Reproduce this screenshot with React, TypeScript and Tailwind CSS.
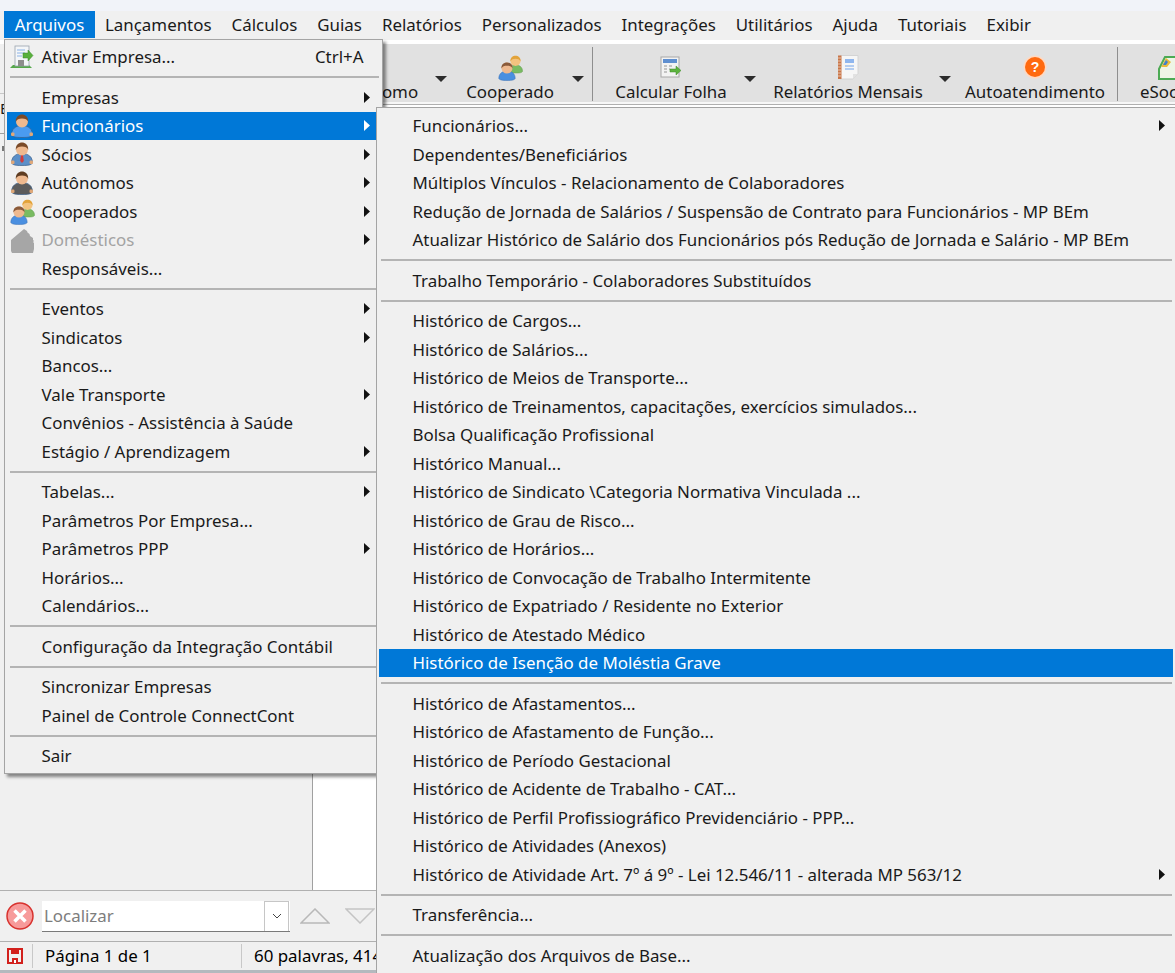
import type { ReactNode } from 'react';

type Row =
  | { sep: true }
  | {
      sep?: false;
      label: string;
      arrow?: boolean;
      active?: boolean;
      disabled?: boolean;
      shortcut?: string;
      icon?: ReactNode;
    };

function Person({ body = '#4a8fe0', hair = '#7a4a28', tie }: { body?: string; hair?: string; tie?: string }) {
  return (
    <svg width="24" height="24" viewBox="0 0 24 24" className="block">
      <path d="M1.500 21c0-6 4-9.500 10.500-9.500S22.500 15 22.500 21c-1.500 2-4 2.500-10.500 2.500S3 23 1.500 21z" fill={body} stroke="#3a5f8a" strokeWidth="0.7" />
      <rect x="1" y="18.500" width="3.500" height="3.500" rx="1.200" fill="#e0a878" />
      <rect x="19.500" y="18.500" width="3.500" height="3.500" rx="1.200" fill="#e0a878" />
      {tie && <path d="M11 13h2l.8 6-1.800 2-1.800-2z" fill={tie} />}
      <circle cx="12" cy="7.500" r="6" fill="#eeb98f" />
      <path d="M5.800 8C5.500 2.500 9 .5 12 .5s6.500 2 6.200 7.500c-1-2.800-3-3.500-6.200-3.500S6.800 5.200 5.800 8z" fill={hair} />
    </svg>
  );
}

function Pair() {
  return (
    <svg width="25" height="26" viewBox="0 0 25 26" className="block">
      <path d="M11 17c0-5 2.500-7 6.500-7s7 2 7 6.500c-1 1.500-3 1.500-6.500 1.500s-6-.2-7-1z" fill="#79bb62" stroke="#5e9a4b" strokeWidth="0.5" />
      <circle cx="17.500" cy="6" r="5" fill="#f3c37f" />
      <path d="M12.400 6.500C12.200 2.500 15 .8 17.500 .8s5.300 1.700 5.100 5.700c-1-2.200-2.800-2.800-5.100-2.800s-4.100.6-5.100 2.800z" fill="#e2a33a" />
      <path d="M.8 23.500c0-5 3.500-7.500 8.200-7.500s8.200 2.500 8.200 7.500c-1 1.500-3 2-8.200 2s-7.200-.5-8.200-2z" fill="#4a8fe0" stroke="#3a6fb0" strokeWidth="0.5" />
      <circle cx="9" cy="13" r="5.500" fill="#eeb98f" />
      <path d="M3.400 13.500C3.200 9 6.300 7.500 9 7.500s5.800 1.500 5.600 6c-1-2.300-3-2.800-5.600-2.800s-4.600.5-5.600 2.800z" fill="#8a5a3a" />
    </svg>
  );
}

function House() {
  return (
    <svg width="26" height="25" viewBox="0 0 26 25" className="block">
      <path d="M1 12 14 1l3 2 .5 1.500 2 1.500.5 2 3 2v2l1 1-1 1 1 1v6l-1 4H2l-1-2z" fill="#a6a6a6" />
    </svg>
  );
}

function ActivateDoc() {
  return (
    <svg width="24" height="24" viewBox="0 0 24 24" className="block">
      <path d="M0 23 3 20h16l3 3z" fill="#55a84a" />
      <rect x="5" y="1" width="14" height="20" fill="#f4f6f8" stroke="#9aa3ad" strokeWidth="0.8" />
      <path d="M7 5h8M7 8h8M7 11h5" stroke="#8ab2e6" strokeWidth="1.200" />
      <rect x="8" y="15" width="6" height="6" fill="#8d8d8d" />
      <path d="M13 8h5V5l5 5.500-5 5.500v-3h-5z" fill="#58b03c" stroke="#3f8a2b" strokeWidth="0.5" />
    </svg>
  );
}

function Arrow({ light }: { light?: boolean }) {
  return (
    <svg width="6" height="11" viewBox="0 0 6 11" className="block">
      <path d="M0 0 6 5.500 0 11z" fill={light ? '#ffffff' : '#111111'} />
    </svg>
  );
}

function Caret() {
  return (
    <svg width="12" height="6" viewBox="0 0 12 6" className="block">
      <path d="M0 0h12L6 6z" fill="#2c2c2c" />
    </svg>
  );
}

const leftRows: Row[] = [
  { label: 'Ativar Empresa...', shortcut: 'Ctrl+A', icon: <ActivateDoc /> },
  { sep: true },
  { label: 'Empresas', arrow: true },
  { label: 'Funcionários', arrow: true, active: true, icon: <Person body="#4a9bf0" /> },
  { label: 'Sócios', arrow: true, icon: <Person body="#5b8fc8" tie="#d23b3b" /> },
  { label: 'Autônomos', arrow: true, icon: <Person body="#5c5c5c" hair="#5f3d22" /> },
  { label: 'Cooperados', arrow: true, icon: <Pair /> },
  { label: 'Domésticos', arrow: true, disabled: true, icon: <House /> },
  { label: 'Responsáveis...' },
  { sep: true },
  { label: 'Eventos', arrow: true },
  { label: 'Sindicatos', arrow: true },
  { label: 'Bancos...' },
  { label: 'Vale Transporte', arrow: true },
  { label: 'Convênios - Assistência à Saúde' },
  { label: 'Estágio / Aprendizagem', arrow: true },
  { sep: true },
  { label: 'Tabelas...', arrow: true },
  { label: 'Parâmetros Por Empresa...' },
  { label: 'Parâmetros PPP', arrow: true },
  { label: 'Horários...' },
  { label: 'Calendários...' },
  { sep: true },
  { label: 'Configuração da Integração Contábil' },
  { sep: true },
  { label: 'Sincronizar Empresas' },
  { label: 'Painel de Controle ConnectCont' },
  { sep: true },
  { label: 'Sair' },
];

const rightRows: Row[] = [
  { label: 'Funcionários...', arrow: true },
  { label: 'Dependentes/Beneficiários' },
  { label: 'Múltiplos Vínculos - Relacionamento de Colaboradores' },
  { label: 'Redução de Jornada de Salários / Suspensão de Contrato para Funcionários - MP BEm' },
  { label: 'Atualizar Histórico de Salário dos Funcionários pós Redução de Jornada e Salário - MP BEm' },
  { sep: true },
  { label: 'Trabalho Temporário - Colaboradores Substituídos' },
  { sep: true },
  { label: 'Histórico de Cargos...' },
  { label: 'Histórico de Salários...' },
  { label: 'Histórico de Meios de Transporte...' },
  { label: 'Histórico de Treinamentos, capacitações, exercícios simulados...' },
  { label: 'Bolsa Qualificação Profissional' },
  { label: 'Histórico Manual...' },
  { label: 'Histórico de Sindicato \\Categoria Normativa Vinculada ...' },
  { label: 'Histórico de Grau de Risco...' },
  { label: 'Histórico de Horários...' },
  { label: 'Histórico de Convocação de Trabalho Intermitente' },
  { label: 'Histórico de Expatriado / Residente no Exterior' },
  { label: 'Histórico de Atestado Médico' },
  { label: 'Histórico de Isenção de Moléstia Grave', active: true },
  { sep: true },
  { label: 'Histórico de Afastamentos...' },
  { label: 'Histórico de Afastamento de Função...' },
  { label: 'Histórico de Período Gestacional' },
  { label: 'Histórico de Acidente de Trabalho - CAT...' },
  { label: 'Histórico de Perfil Profissiográfico Previdenciário - PPP...' },
  { label: 'Histórico de Atividades (Anexos)' },
  { label: 'Histórico de Atividade Art. 7º á 9º - Lei 12.546/11 - alterada MP 563/12', arrow: true },
  { sep: true },
  { label: 'Transferência...' },
  { sep: true },
  { label: 'Atualização dos Arquivos de Base...' },
];

const menuBar = ['Lançamentos', 'Cálculos', 'Guias', 'Relatórios', 'Personalizados', 'Integrações', 'Utilitários', 'Ajuda', 'Tutoriais', 'Exibir'];

function MenuRows({ rows, side }: { rows: Row[]; side: 'left' | 'right' }) {
  return (
    <>
      {rows.map((row, i) => {
        if (row.sep) {
          return (
            <div key={i} className={`h-[12px] flex items-center ${side === 'left' ? 'pl-[2.5px] pr-[3px]' : 'pl-[2px] pr-[1px]'}`}>
              <div className="h-[2px] w-full bg-[#b4b4b4]" />
            </div>
          );
        }
        return (
          <div
            key={i}
            className={`relative h-[28.5px] flex items-center ${side === 'left' ? 'pl-[34.500px] pr-[12.500px]' : 'pl-[33.500px] pr-[8px]'} ${
              row.active ? 'bg-[#0078d7] text-white' : row.disabled ? 'text-[#a3a3a3]' : 'text-[#1a1a1a]'
            }`}
          >
            {row.icon && <span className="absolute left-[3px] top-[2px]">{row.icon}</span>}
            <span className="flex-1 whitespace-nowrap">{row.label}</span>
            {row.shortcut && <span className="pr-[6px]">{row.shortcut}</span>}
            {row.arrow && <Arrow light={row.active} />}
          </div>
        );
      })}
    </>
  );
}

function ToolButton({
  total,
  content,
  caretRight,
  icon,
  label,
}: {
  total: string;
  content: string;
  caretRight?: string;
  icon?: ReactNode;
  label: string;
}) {
  return (
    <div className={`${total} shrink-0 relative h-full`}>
      <div className={`${content} flex flex-col items-center`}>
        <div className="h-[38px] pt-[11px] flex items-start justify-center">{icon}</div>
        <span className="whitespace-nowrap leading-[20px]">{label}</span>
      </div>
      {caretRight && (
        <span className={`absolute top-[32px] ${caretRight}`}>
          <Caret />
        </span>
      )}
    </div>
  );
}

export default function App() {
  return (
    <div className="relative w-[1175px] h-[973px] overflow-hidden bg-[#f0f0f0] font-['Noto_Sans',sans-serif] text-[16.900px] text-[#1a1a1a] flex flex-col">
      <div className="h-[11px] shrink-0 bg-[#f1f3f9]" />

      <div className="h-[29px] shrink-0 flex items-center pl-[4px] bg-[#f0f0f0]">
        <div className="w-[91px] h-[27px] -mt-[2px] flex items-center justify-center bg-[#0078d7] text-white">Arquivos</div>
        {menuBar.map((m) => (
          <div key={m} className="px-[10px] whitespace-nowrap -mt-[1px]">
            {m}
          </div>
        ))}
      </div>

      <div className="h-[4px] shrink-0 bg-white" />

      <div className="flex-1 flex min-h-0">
        <div className="w-[4px] shrink-0 overflow-hidden flex flex-col">
          <div className="h-[49px]" />
          <div className="h-px bg-[#c8c8c8]" />
          <div className="h-[28px] leading-[28px] text-[15px]">E</div>
          <div className="h-[11px]" />
          <div className="h-px bg-[#a0a0a0]" />
          <div className="ml-[2px] mt-[12px] w-[2px] h-[5px] bg-[#777777]" />
        </div>

        <div className="flex-1 min-w-0 flex flex-col">
          <div className="h-[58px] shrink-0 bg-[#e1e1e1] flex pl-[301px] overflow-hidden">
            <ToolButton total="w-[142px]" content="w-[142px]" caretRight="right-[0px]" label="Autônomo" />
            <ToolButton total="w-[145px]" content="w-[126px]" caretRight="right-[8px]" label="Cooperado" icon={<Pair />} />
            <div className="w-px h-[54px] mt-[3px] shrink-0 bg-[#8e8e8e]" />
            <ToolButton
              total="w-[175px]"
              content="w-[156px]"
              caretRight="right-[12px]"
              label="Calcular Folha"
              icon={
                <svg width="24" height="24" viewBox="0 0 24 24" className="block">
                  <rect x="2" y="2" width="18" height="20" fill="#f3f3f3" stroke="#a8a8a8" />
                  <rect x="4" y="4" width="14" height="4" fill="#5f8fd0" />
                  <path d="M5 11h3M10 11h3M5 14h3M5 17h3M10 14h1" stroke="#b5b5b5" strokeWidth="1.500" />
                  <path d="M11 14h6v-3l5 4.500-5 4.500v-3h-6z" fill="#5db33f" stroke="#3e8a2a" strokeWidth="0.5" />
                </svg>
              }
            />
            <ToolButton
              total="w-[187px]"
              content="w-[160px]"
              caretRight="right-[4px]"
              label="Relatórios Mensais"
              icon={
                <svg width="24" height="25" viewBox="0 0 24 25" className="block">
                  <path d="M4 .5h18V19l-5 5H4z" fill="#f6f6f6" stroke="#d4d4d4" />
                  <path d="M17 24v-5h5z" fill="#e2e2e2" />
                  <rect x="2" y=".5" width="3.500" height="23.500" fill="#c8764a" />
                  <path d="M2 3h3M2 6h3M2 9h3M2 12h3M2 15h3M2 18h3M2 21h3" stroke="#f0d6c2" strokeWidth="0.8" />
                  <path d="M9 4h9v4H9z" fill="#8fb6ee" />
                  <path d="M9 11h9M9 14h9" stroke="#9fc0ee" strokeWidth="1.500" />
                </svg>
              }
            />
            <ToolButton
              total="w-[162px]"
              content="w-[160px]"
              label="Autoatendimento"
              icon={
                <svg width="24" height="24" viewBox="0 0 24 24" className="block">
                  <circle cx="12" cy="12" r="11.500" fill="#ffd9c2" />
                  <circle cx="12" cy="12" r="10" fill="#ff6a10" />
                  <text x="12" y="17" textAnchor="middle" fontSize="14" fontWeight="700" fill="#ffffff" fontFamily="Liberation Sans">
                    ?
                  </text>
                </svg>
              }
            />
            <div className="w-px h-[54px] mt-[3px] shrink-0 bg-[#8e8e8e]" />
            <div className="flex-1 flex flex-col pl-[22px] min-w-0">
              <div className="h-[38px] pt-[11px] pl-[18px]">
                <svg width="30" height="25" viewBox="0 0 30 25" className="block">
                  <path d="M1 14 7 2H30V24H1z" fill="#eef5e6" stroke="#4caa54" strokeWidth="2" />
                  <path d="M3 12 8 3l5 4-4 5z" fill="#e8b93c" />
                  <path d="M5 10 8 5l2 2-2 3z" fill="#3d7fd0" />
                </svg>
              </div>
              <span className="whitespace-nowrap leading-[20px]">eSocial</span>
            </div>
          </div>
          <div className="h-[3px] shrink-0 bg-[#f7f7f7] border-b border-[#b0b0b0]" />

          <div className="flex-1 flex">
            <div className="w-[309px] shrink-0 border-r border-[#a0a0a0]" />
            <div className="flex-1 bg-white" />
          </div>
        </div>
      </div>

      <div className="h-[51px] shrink-0 border-t border-[#b0b0b0] flex items-center pl-[6px] relative">
        <svg width="28" height="28" viewBox="0 0 28 28" className="block shrink-0">
          <circle cx="14" cy="14" r="13" fill="#f79a9a" stroke="#d8322e" strokeWidth="1.500" />
          <path d="M8.500 8.500 19.500 19.500M19.500 8.500 8.500 19.500" stroke="#ffffff" strokeWidth="3.500" />
        </svg>
        <div className="ml-[8px] w-[248px] h-[31px] shrink-0 flex bg-white border-b border-[#7a7a7a]">
          <div className="w-[222px] pl-[2px] flex items-center text-[#7d7d7d]">Localizar</div>
          <div className="w-[25px] flex items-center justify-center border border-b-0 border-[#c6c6c6]">
            <svg width="10" height="6" viewBox="0 0 10 6">
              <path d="M1 1l4 4 4-4" fill="none" stroke="#444444" strokeWidth="1" />
            </svg>
          </div>
        </div>
        <svg width="30" height="16" viewBox="0 0 30 16" className="block ml-[10px] shrink-0">
          <path d="M1 15 15 1l14 14z" fill="none" stroke="#b8b8b8" strokeWidth="1.500" />
        </svg>
        <svg width="30" height="16" viewBox="0 0 30 16" className="block ml-[15px] shrink-0">
          <path d="M1 1 15 15 29 1z" fill="none" stroke="#c4c4c4" strokeWidth="1.500" />
        </svg>
      </div>

      <div className="h-[29px] shrink-0 border-t border-[#b0b0b0] flex items-center text-black">
        <div className="w-[33px] h-[24px] shrink-0 flex items-center pl-[7px] border-r border-[#c8c8c8]">
          <svg width="16" height="16" viewBox="0 0 16 16" className="block">
            <path d="M1 1h14v14H1z" fill="none" stroke="#d2201c" strokeWidth="2" />
            <path d="M4 1h8v5H4zM5 10h6v5H5z" fill="#d2201c" />
            <rect x="7" y="12" width="2" height="3" fill="#ffffff" />
          </svg>
        </div>
        <div className="w-[209px] h-[24px] shrink-0 pl-[12px] flex items-center border-r border-[#c8c8c8] whitespace-nowrap">Página 1 de 1</div>
        <div className="pl-[12px] whitespace-nowrap">60 palavras, 414 caracteres</div>
      </div>
      <div className="h-[3px] shrink-0 bg-[#b4b9be]" />

      <div className="absolute left-[4px] top-[39px] w-[379px] border-[1.5px] border-[#a4a4a4] bg-[#f0f0f0] pt-[2.500px] pb-[2.500px] pl-[2px] shadow-[3px_3px_3px_rgba(0,0,0,0.45)]">
        <MenuRows rows={leftRows} side="left" />
      </div>

      <div className="absolute left-[376px] top-[107px] w-[810px] h-[880px] border-[1.5px] border-[#a4a4a4] bg-[#f0f0f0] pt-[3.500px] pl-[2px] pr-[12px]">
        <MenuRows rows={rightRows} side="right" />
      </div>
    </div>
  );
}
